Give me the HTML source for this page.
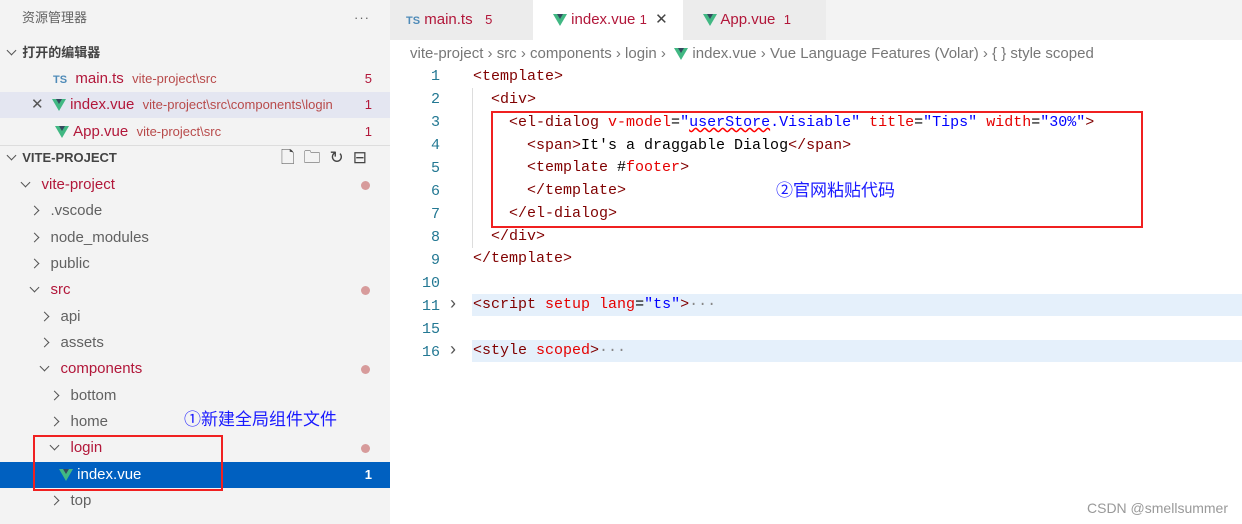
<!DOCTYPE html>
<html><head><meta charset="utf-8"><style>
*{margin:0;padding:0;box-sizing:border-box}
body{width:1242px;height:524px;overflow:hidden;background:#fff;font-family:"Liberation Sans","Noto Sans CJK SC",sans-serif;font-size:15px;position:relative}
.side{position:absolute;left:0;top:0;width:390px;height:524px;background:#f3f3f3}
.row{position:absolute;left:0;width:390px;height:26px;line-height:26px;color:#616161;white-space:nowrap}
.red{color:#b2173a}
.desc{font-size:13px;color:#b84a4a}
.badge{position:absolute;right:18px;top:0;color:#b2173a;font-size:13px}
.dot{position:absolute;right:20px;top:9px;width:9px;height:9px;border-radius:50%;background:#d79b9b}
.chev{display:inline-block;width:7px;height:7px;border-right:1.3px solid #555;border-bottom:1.3px solid #555;vertical-align:middle}
.down{transform:rotate(45deg);margin-top:-6px}
.right{transform:rotate(-45deg);margin-top:-2px}
.v{display:inline-block;width:0;height:0;border-left:7px solid transparent;border-right:7px solid transparent;border-top:12px solid #41b883;vertical-align:middle;position:relative}
.v:after{content:"";position:absolute;left:-3px;top:-12px;border-left:3px solid transparent;border-right:3px solid transparent;border-top:5px solid #35495e}
.tabs{position:absolute;left:390px;top:0;width:852px;height:40px;background:#f3f3f3}
.tab{position:absolute;top:0;height:40px;line-height:40px;font-size:15px;white-space:nowrap;padding-left:16px}
.ln{position:absolute;left:400px;width:40px;text-align:right;color:#237893;font-family:"Liberation Mono",monospace;font-size:15px}
.cl{position:absolute;left:473px;height:23px;line-height:23px;white-space:pre;font-family:"Liberation Mono",monospace;font-size:15px;color:#800000}
.a{color:#e50000}.s{color:#0000ff}.t{color:#000}
.fold{position:absolute;left:450px;height:23px;line-height:23px;color:#555;font-size:18px}
</style></head><body>
<div class="side">
 <div class="row" style="top:5px;padding-left:22px;font-size:13px">资源管理器<span style="position:absolute;right:20px;letter-spacing:1px">···</span></div>
 <div class="row" style="top:40px;padding-left:8px;font-size:13px;font-weight:bold;color:#444"><span class="chev down"></span>&nbsp;&nbsp;打开的编辑器</div>
 <div class="row" style="top:66px;padding-left:53px"><b style="color:#4f8bb8;font-size:11px">TS</b>&nbsp; <span class="red">main.ts</span>&nbsp; <span class="desc">vite-project\src</span><span class="badge">5</span></div>
 <div class="row" style="top:92px;background:#e4e6f1;padding-left:31px"><span style="color:#555">✕</span>&nbsp; <span class="v"></span>&nbsp;<span class="red">index.vue</span>&nbsp; <span class="desc">vite-project\src\components\login</span><span class="badge">1</span></div>
 <div class="row" style="top:119px;padding-left:55px"><span class="v"></span>&nbsp;<span class="red">App.vue</span>&nbsp; <span class="desc">vite-project\src</span><span class="badge">1</span></div>
 <div style="position:absolute;top:145px;left:0;width:390px;border-top:1px solid #ddd"></div>
 <div class="row" style="top:145px;padding-left:8px;font-size:13px;font-weight:bold;color:#444"><span class="chev down"></span>&nbsp;&nbsp;VITE-PROJECT<span style="position:absolute;right:14px;font-weight:normal;font-size:17px;letter-spacing:9px;color:#444">🗋🗀↻⊟</span></div>
 <div class="row red" style="top:172px;padding-left:22px"><span class="chev down"></span>&nbsp;&nbsp; vite-project<span class="dot"></span></div>
 <div class="row" style="top:198px;padding-left:31px"><span class="chev right"></span>&nbsp;&nbsp; .vscode</div>
 <div class="row" style="top:225px;padding-left:31px"><span class="chev right"></span>&nbsp;&nbsp; node_modules</div>
 <div class="row" style="top:251px;padding-left:31px"><span class="chev right"></span>&nbsp;&nbsp; public</div>
 <div class="row red" style="top:277px;padding-left:31px"><span class="chev down"></span>&nbsp;&nbsp; src<span class="dot"></span></div>
 <div class="row" style="top:304px;padding-left:41px"><span class="chev right"></span>&nbsp;&nbsp; api</div>
 <div class="row" style="top:330px;padding-left:41px"><span class="chev right"></span>&nbsp;&nbsp; assets</div>
 <div class="row red" style="top:356px;padding-left:41px"><span class="chev down"></span>&nbsp;&nbsp; components<span class="dot"></span></div>
 <div class="row" style="top:383px;padding-left:51px"><span class="chev right"></span>&nbsp;&nbsp; bottom</div>
 <div class="row" style="top:409px;padding-left:51px"><span class="chev right"></span>&nbsp;&nbsp; home</div>
 <div class="row red" style="top:435px;padding-left:51px"><span class="chev down"></span>&nbsp;&nbsp; login<span class="dot"></span></div>
 <div class="row" style="top:462px;background:#0060c0;color:#fff;padding-left:59px"><span class="v"></span>&nbsp;index.vue<span class="badge" style="color:#fff;font-weight:bold">1</span></div>
 <div class="row" style="top:488px;padding-left:51px"><span class="chev right"></span>&nbsp;&nbsp; top</div>
 <div style="position:absolute;left:184px;top:405px;color:#1a1aff;font-size:17px">①新建全局组件文件</div>
 <div style="position:absolute;left:33px;top:435px;width:190px;height:56px;border:2px solid #f02020"></div>
</div>
<div class="tabs">
 <div class="tab" style="left:0;width:143px;background:#ececec"><b style="color:#4f8bb8;font-size:11px">TS</b> <span class="red">main.ts</span>&nbsp;&nbsp; <span class="red" style="font-size:13px">5</span></div>
 <div class="tab" style="left:143px;width:150px;background:#fff;padding-left:20px"><span class="v"></span> <span class="red">index.vue</span> <span class="red" style="font-size:13px">1</span>&nbsp; <span style="color:#444">✕</span></div>
 <div class="tab" style="left:293px;width:143px;background:#ececec;padding-left:20px"><span class="v"></span> <span class="red">App.vue</span>&nbsp; <span class="red" style="font-size:13px">1</span></div>
</div>
<div style="position:absolute;left:410px;top:42px;height:24px;line-height:24px;color:#777;font-size:15px;white-space:nowrap">vite-project › src › components › login › &nbsp;<span class="v"></span> index.vue › Vue Language Features (Volar) › { } style scoped</div>
<div style="position:absolute;left:472px;top:294px;width:770px;height:22px;background:#e5f0fb"></div>
<div style="position:absolute;left:472px;top:340px;width:770px;height:22px;background:#e5f0fb"></div>
<div style="position:absolute;left:472px;top:88px;height:160px;border-left:1px solid #ddd"></div>
<div style="position:absolute;left:491px;top:134px;height:72px;border-left:1px solid #ddd"></div>
<div class="ln" style="top:65px;line-height:23px">1<br>2<br>3<br>4<br>5<br>6<br>7<br>8<br>9<br>10<br>11<br>15<br>16</div>
<div class="fold" style="top:292px">›</div>
<div class="fold" style="top:338px">›</div>
<div class="cl" style="top:65px">&lt;template&gt;</div>
<div class="cl" style="top:88px">  &lt;div&gt;</div>
<div class="cl" style="top:111px">    &lt;el-dialog <span class="a">v-model</span><span class="t">=</span><span class="s">"<span style="text-decoration:underline wavy red">userStore</span>.Visiable"</span> <span class="a">title</span><span class="t">=</span><span class="s">"Tips"</span> <span class="a">width</span><span class="t">=</span><span class="s">"30%"</span>&gt;</div>
<div class="cl" style="top:134px">      &lt;span&gt;<span class="t">It's a draggable Dialog</span>&lt;/span&gt;</div>
<div class="cl" style="top:156px">      &lt;template <span class="t">#</span><span class="a">footer</span>&gt;</div>
<div class="cl" style="top:179px">      &lt;/template&gt;</div>
<div class="cl" style="top:202px">    &lt;/el-dialog&gt;</div>
<div class="cl" style="top:225px">  &lt;/div&gt;</div>
<div class="cl" style="top:247px">&lt;/template&gt;</div>
<div class="cl" style="top:293px">&lt;script <span class="a">setup</span> <span class="a">lang</span><span class="t">=</span><span class="s">"ts"</span>&gt;<span style="color:#888">···</span></div>
<div class="cl" style="top:339px">&lt;style <span class="a">scoped</span>&gt;<span style="color:#888">···</span></div>
<div style="position:absolute;left:491px;top:111px;width:652px;height:117px;border:2px solid #f02020"></div>
<div style="position:absolute;left:776px;top:176px;color:#1a1aff;font-size:17px">②官网粘贴代码</div>
<div style="position:absolute;right:14px;top:500px;color:#999;font-size:14px">CSDN @smellsummer</div>
</body></html>
